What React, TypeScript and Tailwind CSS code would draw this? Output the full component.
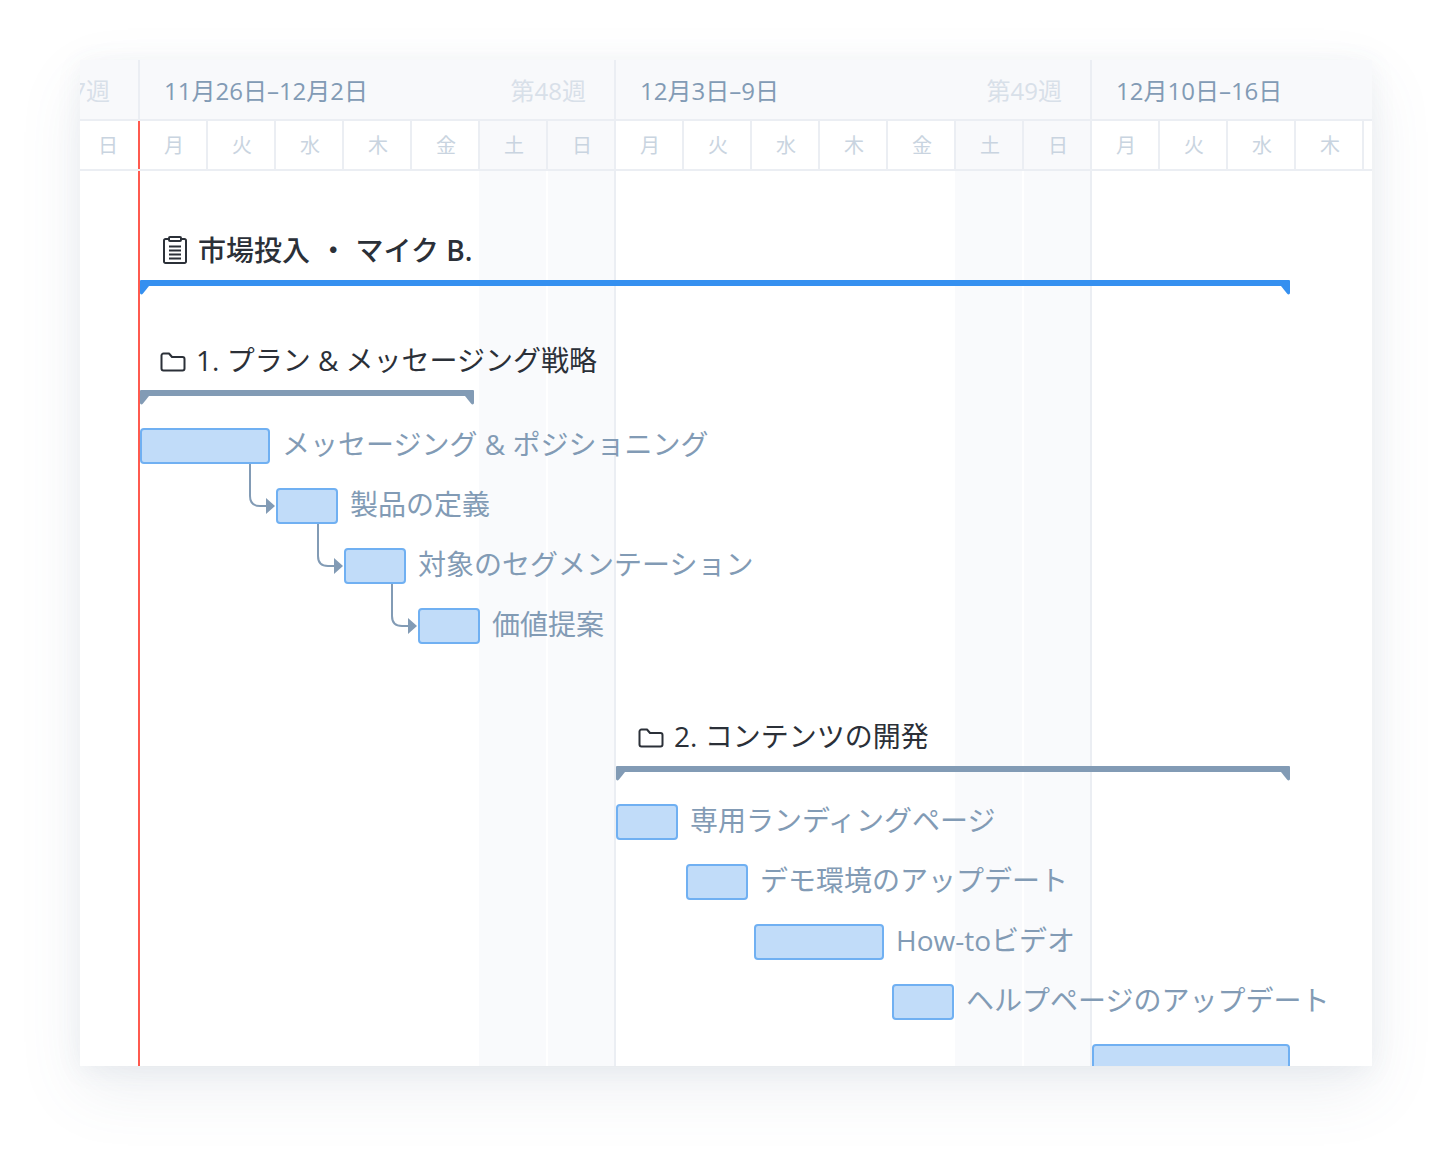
const weeks = [
  { date: "11月26日–12月2日", num: "第48週" },
  { date: "12月3日–9日", num: "第49週" },
];
const dayNames = ["月", "火", "水", "木", "金", "土", "日"];
const lastWeekDays = ["月", "火", "水", "木", ""];

const ClipboardIcon = () => (
  <svg width="28" height="30" viewBox="0 0 28 30" fill="none" stroke="#2b3038" strokeWidth="2">
    <path d="M8 4H4.500A1.500 1.500 0 0 0 3 5.500V26.500A1.500 1.500 0 0 0 4.500 28H23.500A1.500 1.500 0 0 0 25 26.500V5.500A1.500 1.500 0 0 0 23.500 4H20" />
    <rect x="8" y="2" width="12" height="4" rx="1" />
    <path d="M8 11.500H20M8 15.500H20M8 19.500H20M8 23.500H20" />
  </svg>
);

const FolderIcon = () => (
  <svg width="26" height="20" viewBox="0 0 26 20" fill="none" stroke="#2b3038" strokeWidth="2" strokeLinejoin="round" className="mt-[3px]">
    <path d="M1.500 3.500A2 2 0 0 1 3.500 1.500H9L12 5H22.500A2 2 0 0 1 24.500 7V16.500A2 2 0 0 1 22.500 18.500H3.500A2 2 0 0 1 1.500 16.500Z" />
  </svg>
);

const Notch = ({ side }: { side: "left" | "right" }) => (
  <svg
    width="9"
    height="9"
    viewBox="0 0 9 9"
    fill="currentColor"
    className={side === "left" ? "absolute left-0 top-[6px]" : "absolute right-0 top-[6px] -scale-x-100"}
  >
    <path d="M0 0H9L3 7.500Q1.500 9 .5 8Q0 7.500 0 6.500Z" />
  </svg>
);

const GroupBar = ({ width, color }: { width: string; color: string }) => (
  <div className={`relative h-[6px] rounded-t-[1px] ${width} ${color}`}>
    <Notch side="left" />
    <Notch side="right" />
  </div>
);

const Connector = ({ w, h }: { w: number; h: number }) => (
  <svg
    width={w}
    height={h}
    viewBox={`0 0 ${w} ${h}`}
    fill="none"
    className="absolute overflow-visible text-[#829bb5]"
    style={{ left: -w - 3, top: 17 - h }}
  >
    <path d={`M1 0V${h - 11}Q1 ${h - 1} 11 ${h - 1}H${w - 8}`} stroke="currentColor" strokeWidth="2" />
    <path d={`M${w - 9} ${h - 9}L${w} ${h - 1}L${w - 9} ${h + 7}Z`} fill="currentColor" />
  </svg>
);

const Task = ({
  label,
  left,
  width,
  conn,
}: {
  label: string;
  left: string;
  width: string;
  conn?: { w: number; h: number };
}) => (
  <div className={`flex h-9 items-center ${left}`}>
    <div className={`relative h-9 shrink-0 rounded-[4px] border-2 border-[#70b0f2] bg-[#c1dcf9] ${width}`}>
      {conn && <Connector w={conn.w} h={conn.h} />}
    </div>
    {label && <span className="ml-[12px] whitespace-nowrap pb-[4px] text-[28px] leading-9 text-[#829bb5]">{label}</span>}
  </div>
);

export default function App() {
  return (
    <div className="h-[1166px] w-[1452px] bg-white pt-[60px] pl-[80px] font-['Open_Sans','Noto_Sans_CJK_JP',sans-serif]">
      <div className="h-[1006px] w-[1292px] overflow-hidden bg-white shadow-[0_24px_60px_rgba(90,110,140,0.10),0_4px_24px_rgba(90,110,140,0.08)]">
        {/* week header */}
        <div className="flex h-[61px] border-b-2 border-[#ebeef3] bg-[#f8f9fb]">
          <div className="flex w-[60px] shrink-0 items-center justify-end overflow-hidden whitespace-nowrap border-r-2 border-[#ebeef3] pr-[28px] pt-[2px] text-2xl text-[#d8e0e9]">
            第47週
          </div>
          {weeks.map((week) => (
            <div
              key={week.num}
              className="flex w-[476px] shrink-0 items-center justify-between border-r-2 border-[#ebeef3] pl-[24px] pr-[28px] pt-[2px] text-2xl"
            >
              <span className="text-[#829bb5]">{week.date}</span>
              <span className="text-[#d8e0e9]">{week.num}</span>
            </div>
          ))}
          <div className="flex items-center whitespace-nowrap pl-[24px] pt-[2px] text-2xl text-[#829bb5]">12月10日–16日</div>
        </div>

        {/* day header */}
        <div className="flex h-[50px] border-b-2 border-[#ebeef3] text-xl text-[#c9d4e0]">
          <div className="flex w-[60px] shrink-0 items-center justify-center border-r-2 border-[#ff5a4f] pt-[2px] pr-[2px]">日</div>
          {[0, 1].flatMap((w) =>
            dayNames.map((d, i) => (
              <div
                key={`${w}-${i}`}
                className={
                  i > 4
                    ? "flex w-[68px] shrink-0 items-center justify-center border-r-2 border-[#ebeef3] bg-[#f8f9fb] pl-[2px] pt-[2px]"
                    : "flex w-[68px] shrink-0 items-center justify-center border-r-2 border-[#ebeef3] pl-[2px] pt-[2px]"
                }
              >
                {d}
              </div>
            ))
          )}
          {lastWeekDays.map((d, i) => (
            <div
              key={i}
              className="flex w-[68px] shrink-0 items-center justify-center border-r-2 border-[#ebeef3] pl-[2px] pt-[2px]"
            >
              {d}
            </div>
          ))}
        </div>

        {/* chart body */}
        <div className="relative h-[895px] overflow-hidden">
          <div className="absolute inset-0 flex">
            <div className="w-[60px] shrink-0 border-r-2 border-[#ff5a4f]" />
            {[0, 1].map((w) => (
              <div key={w} className="flex w-[476px] shrink-0 justify-end gap-[2px] border-r-2 border-[#ebeef3]">
                <div className="w-[67px] bg-[#f9fafc]" />
                <div className="w-[66px] bg-[#f9fafc]" />
              </div>
            ))}
          </div>

          <div className="relative">
            {/* project */}
            <div className="ml-[81px] box-content flex h-[38px] items-center pt-[60px] text-[28px] font-medium leading-[38px] text-[#2b3038]">
              <ClipboardIcon />
              <span className="ml-[9px] whitespace-pre">
                市場投入 <span className="ml-[2px] mr-[1px]">・</span> マイク <span className="font-semibold">B.</span>
              </span>
            </div>
            <div className="ml-[60px] mt-[11px] text-[#3590f0]">
              <GroupBar width="w-[1150px]" color="bg-[#3590f0]" />
            </div>

            {/* group 1 */}
            <div className="ml-[80px] mt-[55px] flex h-[38px] items-center text-[28px] leading-[38px] text-[#2b3038]">
              <FolderIcon />
              <span className="ml-[10px] whitespace-nowrap">1. プラン & メッセージング戦略</span>
            </div>
            <div className="ml-[60px] mt-[11px] text-[#829bb5]">
              <GroupBar width="w-[334px]" color="bg-[#829bb5]" />
            </div>
            <div className="mt-[32px] flex flex-col gap-6">
              <Task label="メッセージング & ポジショニング" left="ml-[60px]" width="w-[130px]" />
              <Task label="製品の定義" left="ml-[196px]" width="w-[62px]" conn={{ w: 26, h: 43 }} />
              <Task label="対象のセグメンテーション" left="ml-[264px]" width="w-[62px]" conn={{ w: 26, h: 43 }} />
              <Task label="価値提案" left="ml-[338px]" width="w-[62px]" conn={{ w: 26, h: 43 }} />
            </div>

            {/* group 2 */}
            <div className="ml-[558px] mt-[73px] flex h-[38px] items-center text-[28px] leading-[38px] text-[#2b3038]">
              <FolderIcon />
              <span className="ml-[10px] whitespace-nowrap">2. コンテンツの開発</span>
            </div>
            <div className="ml-[536px] mt-[11px] text-[#829bb5]">
              <GroupBar width="w-[674px]" color="bg-[#829bb5]" />
            </div>
            <div className="mt-[32px] flex flex-col gap-6">
              <Task label="専用ランディングページ" left="ml-[536px]" width="w-[62px]" />
              <Task label="デモ環境のアップデート" left="ml-[606px]" width="w-[62px]" />
              <Task label="How-toビデオ" left="ml-[674px]" width="w-[130px]" />
              <Task label="ヘルプページのアップデート" left="ml-[812px]" width="w-[62px]" />
              <Task label="" left="ml-[1012px]" width="w-[198px]" />
            </div>
          </div>
        </div>
      </div>
    </div>
  );
}
